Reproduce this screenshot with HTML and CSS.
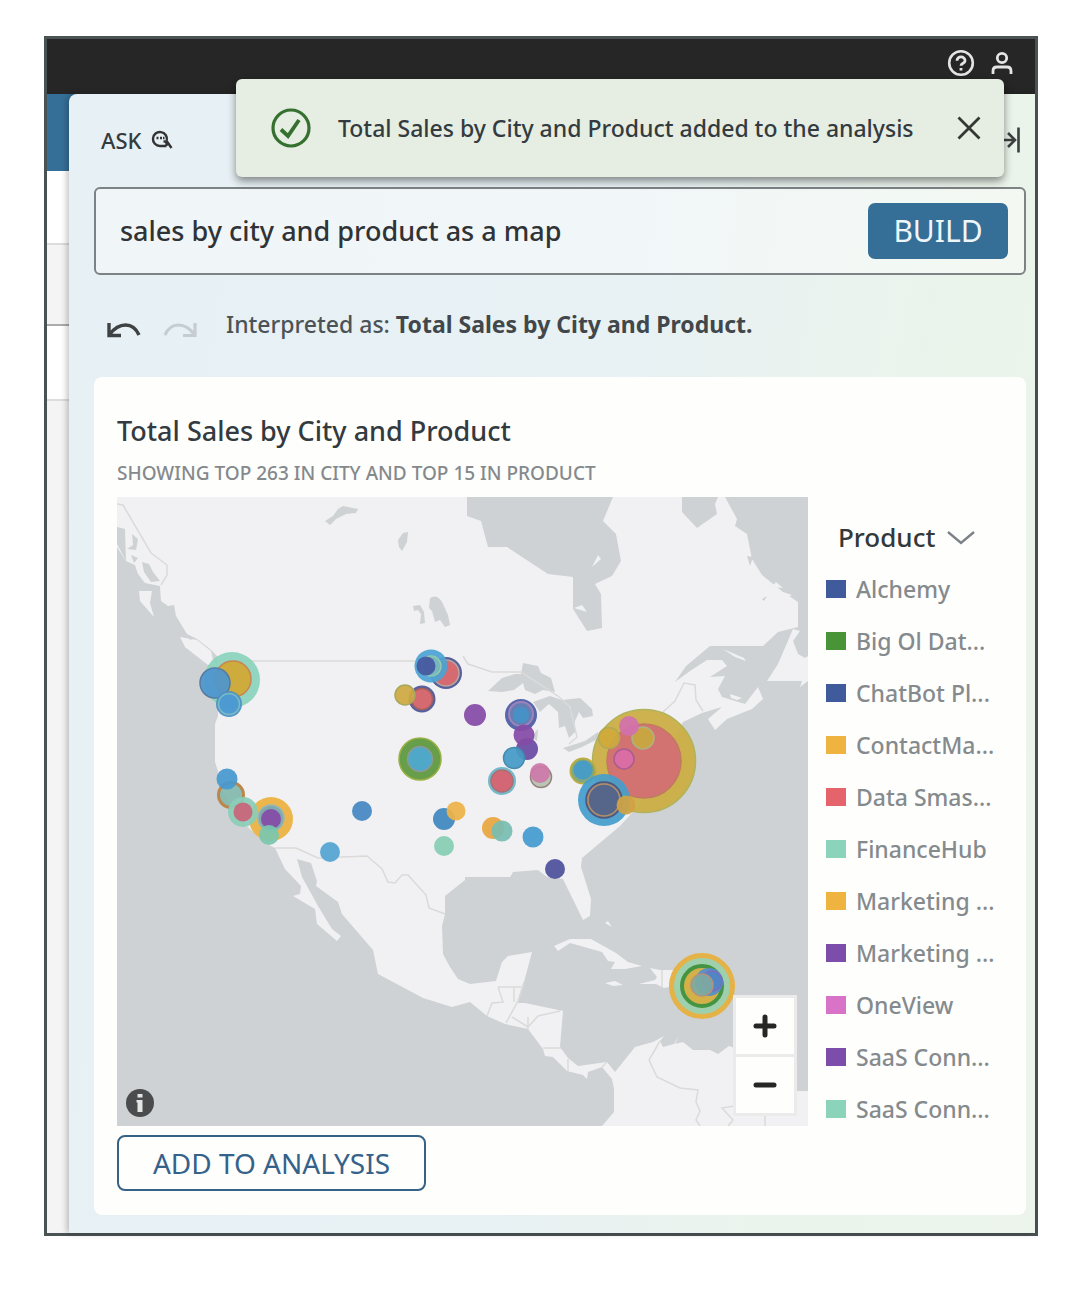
FILE: index.html
```html
<!DOCTYPE html>
<html lang="en">
<head>
<meta charset="utf-8">
<meta name="viewport" content="width=device-width, initial-scale=1">
<title>Total Sales by City and Product</title>
<link rel="stylesheet" href="styles.css">
</head>
<body>
<div class="window">
  <header class="topbar">
    <button class="icon-button" type="button" aria-label="Help">
      <svg width="28" height="28" viewBox="0 0 28 28" fill="none" stroke="#e4e4e4" stroke-width="2.600"><circle cx="14" cy="14" r="11.800"/><path d="M10 11.800c0-5.400 8.200-5 8 0-.2 2.600-4 2.400-4 5M14 19v2.600" stroke-width="2.800"/></svg>
    </button>
    <button class="icon-button" type="button" aria-label="Account">
      <svg width="22" height="24" viewBox="0 0 22 24" fill="none" stroke="#e4e4e4" stroke-width="2.800"><circle cx="11" cy="7" r="4.700"/><path d="M2 23v-3q0-4 4-4h10q4 0 4 4v3"/></svg>
    </button>
  </header>

  <div class="workspace">
    <div class="backdrop" aria-hidden="true">
      <div class="strip strip-blue"></div>
      <div class="strip strip-white"></div>
      <div class="strip strip-grey"></div>
      <div class="strip strip-field"></div>
      <div class="strip strip-rest"></div>
    </div>

    <main class="panel">
      <div class="panel-head">
        <h1 class="panel-title">ASK
          <svg width="22" height="20" viewBox="0 0 22 20" fill="none" stroke="#333" stroke-width="2.400"><path d="M15.500 16H9A7 7 0 1 1 15.800 10.500"/><path d="M12.500 11.500H16l4.500 6.500M15.500 11v5M5.500 8h2M9 8h2M12 8h1.500"/></svg>
        </h1>
        <button class="icon-button" type="button" aria-label="Collapse panel">
          <svg width="22" height="28" viewBox="0 0 22 28" fill="none" stroke="#3c4040" stroke-width="2.600"><path d="M2 14h14M9 7l7 7-7 7M19.500 1.500v25"/></svg>
        </button>
      </div>

      <form class="search">
        <input class="search-input" type="text" aria-label="Question" value="sales by city and product as a map">
        <button class="build" type="button">BUILD</button>
      </form>

      <div class="interpreted">
        <div class="history">
          <button class="icon-button" type="button" aria-label="Undo">
            <svg width="34" height="16" viewBox="0 0 34 16" fill="none" stroke="#3f4243" stroke-width="3.400"><path d="M2 1v12.500h12M2.500 12.500C12 0 26-.5 32 13"/></svg>
          </button>
          <button class="icon-button" type="button" aria-label="Redo" disabled>
            <svg width="34" height="16" viewBox="0 0 34 16" fill="none" stroke="#c6cdd0" stroke-width="3.200"><path d="M32 1v12.500H20M31.500 12.500C22 0 8-.5 2 13"/></svg>
          </button>
        </div>
        <p class="reading">Interpreted as: <strong>Total Sales by City and Product.</strong></p>
      </div>

      <section class="card">
        <h2 class="card-title">Total Sales by City and Product</h2>
        <p class="card-note">SHOWING TOP 263 IN CITY AND TOP 15 IN PRODUCT</p>
        <div class="visual">
          <div class="map">
            <svg class="map-art" viewBox="117 498 691 629" role="img" aria-label="Map of sales by city and product">
              <rect x="117" y="498" width="691" height="629" fill="#ced2d4"/>
              <g fill="#f1f1f3">
                <path d="M117 498V548L126 562 135 566 138 575 145 584 160 587 161 602 168 607 174 606 176 617 187 635 197 640 210 650 217 658V677L218 717 215 725V763L218 772 222 790 235 815 250 830 267 845 275 849 285 870 301 887 300 895 293 897 315 910 317 925 337 942 341 937 332 930 318 907 302 878 297 860 311 864 317 882 316 887 338 903 342 915 373 951 378 975 423 999 452 1008 470 1003 487 1017 505 1025 528 1030 543 1050 545 1057 553 1058 567 1072 583 1076 587 1080 588 1073 602 1068 612 1080 614 1090V1113L602 1127H808V1092H796L732 1048 729 1047 718 1055 710 1051H693L683 1043 675 1045 679 1037 674 1045 663 1048 660 1042 664 1037 653 1043 635 1048 615 1073 607 1063 578 1067 568 1059 560 1048 563 1012 525 1004H518L524 983 532 953 508 957 502 963 496 982 470 985 458 980 450 968 443 955 442 927 445 915V897L465 881V878H510L513 873 538 871 547 878 563 880 583 921 590 917 591 900 581 868 582 859 620 827 640 805 683 723 702 714 722 708 708 720 715 731 727 720 752 710 763 700 758 688 745 705 722 698 718 690 725 677 710 678 727 667 722 661H707L690 672 675 683 686 667 710 647H763L778 633 798 628V603L783 593 762 576 752 560 747 535 735 527 737 520 725 498H718L715 505 717 515 697 529 682 513V498H613L603 522 616 535 621 562 612 577 595 585 601 595 602 629 587 632 573 610V578L548 575 507 548H488L481 522 467 517V498Z"/>
                <path d="M180 638L185 648 208 666 217 668 211 652 197 641ZM139 592H152L150 604 154 618 140 602ZM793 630L800 632 793 642 798 655 805 659 808 657V682L800 688 802 682H767L778 665ZM592 568L598 556 601 560ZM574 609L582 606 587 613ZM723 650L744 659 746 662 735 658ZM730 695L742 699 737 701 731 699ZM776 583L783 589 772 588ZM783 593L792 596 786 599Z"/>
                <path d="M554 947L570 940H591L616 954 628 963 642 967 625 970H611L615 963 608 962 602 953 570 944 558 952ZM605 924L608 922 612 928ZM605 984L615 982 623 986 613 987ZM650 969L660 971H685V985L664 989 656 985H639L655 981 657 978Z"/>
              </g>
              <g fill="#ced2d4">
                <path d="M325 522L333 517 338 510 343 507 358 510 356 514 346 515 336 520 330 526ZM398 541L403 534 408 533 407 543 402 552 399 548ZM430 599Q438 594 443 605L448 616 450 626 445 628 440 621 435 623 432 612 429 609ZM413 607L420 606 424 613 425 624 420 625 421 615 418 611 414 612Z"/>
                <path d="M488 692L502 679 515 675 521 675 523 664 538 667 541 674 551 679 555 693 543 691 535 695 525 691 523 684 514 691 502 693ZM533 703L550 697 562 701 580 699 592 710 593 717 583 719 579 713 575 722 575 733 569 739 565 727 559 729 558 713 549 705 540 713ZM563 749L585 742 598 733 600 739 582 748 569 753ZM531 738L538 730 537 742Z"/>
                <path d="M132 535L138 540 136 551 127 550 133 546ZM131 556L138 559 134 564ZM142 563L149 565 153 573 160 582 151 583 144 573ZM117 528L125 530 126 562 117 545ZM188 637L195 639 190 641ZM211 651L218 658 213 661ZM747 557L753 558 750 567ZM762 600L767 597 764 602Z"/>
              </g>
              <g fill="none" stroke="#dadad9" stroke-width="1.500">
                <path d="M117 505L123 506 151 554 167 566V576L161 586M232 662H415M463 657L468 665 492 673 521 673 558 697 570 708 577 738 569 745M663 713L675 702 684 684 695 686 696 701 703 712"/>
                <path d="M275 849H296L318 859 367 857 382 870 388 883 395 884 402 876 408 876 426 896 429 909 445 915M498 988H524M498 988L503 1003 492 1004 487 1017M514 988V1003M524 983L518 1002 506 1024M512 1018L528 1028 538 1017 560 1012M528 1018V1030M543 1049H561M568 1060V1072M607 1063L602 1068M662 971V988M660 1042L649 1061 657 1078 680 1089 698 1091 696 1103 700 1112 696 1121 700 1127M734 1107L722 1109 733 1121 728 1127M765 1116V1127"/>
              </g>
              <g fill-opacity=".93" stroke-width="1.500">
                <circle cx="232" cy="681" r="28" fill="#8bd3bb"/><circle cx="233" cy="680" r="18" fill="#d2a832" stroke="#c98452"/>
                <circle cx="215" cy="684" r="15" fill="#4d96cd" stroke="#567ba2"/><circle cx="229" cy="705" r="13" fill="#4a8fc5"/><circle cx="229" cy="705" r="10.500" fill="#4d9bd4" stroke="#79bac4"/>
                <circle cx="231" cy="796" r="12.500" fill="#83b9ad" stroke="#bd864a" stroke-width="3"/><circle cx="227" cy="780" r="10.500" fill="#4799cf"/>
                <circle cx="271" cy="820" r="22" fill="#ecb23f"/><circle cx="271" cy="819" r="13" fill="#79a8b7" stroke="#9ab8b2"/><circle cx="271" cy="820" r="10" fill="#844ba6"/>
                <circle cx="243" cy="813" r="15" fill="#8bcdb8"/><circle cx="243" cy="813" r="9.500" fill="#c9647a"/><circle cx="269" cy="836" r="10" fill="#7ac6ae"/>
                <circle cx="446" cy="674" r="16" fill="#4b5495"/><circle cx="446" cy="674" r="13" fill="#e06a6e" stroke="#b6a6a1"/>
                <circle cx="431" cy="667" r="16.500" fill="#4ca4d4"/><circle cx="431" cy="667" r="10" fill="#79b9ba" stroke="#90c9b1"/><circle cx="426" cy="667" r="9.500" fill="#4657a0"/>
                <circle cx="422" cy="700" r="13.500" fill="#4b5495"/><circle cx="422" cy="700" r="10.500" fill="#e06a6e" stroke="#a9605e"/><circle cx="405" cy="696" r="10" fill="#cfaa42" stroke="#a5a85d"/>
                <circle cx="420" cy="760" r="21" fill="#5d983b" stroke="#9bb044"/><circle cx="420" cy="760" r="12.500" fill="#4fa9d3" stroke="#8e9895"/>
                <circle cx="475" cy="716" r="11" fill="#844ba6"/><circle cx="521" cy="716" r="16" fill="#4b5ca4"/><circle cx="521" cy="715" r="12" fill="#6681b4" stroke="#9d83bd" stroke-width="2"/><circle cx="521" cy="716" r="8" fill="#4592c8"/>
                <circle cx="527" cy="750" r="11" fill="#6c4ba3"/><circle cx="524" cy="736" r="10.500" fill="#844ba6"/><circle cx="514" cy="759" r="10.500" fill="#459bc6" stroke="#448bae"/>
                <circle cx="502" cy="782" r="14" fill="#6db4c7"/><circle cx="502" cy="782" r="11" fill="#da616e" stroke="#a67272"/><circle cx="541" cy="778" r="10.500" fill="#b7c2ae" stroke="#96837f"/><circle cx="540" cy="774" r="10" fill="#cd7aaa"/>
                <circle cx="362" cy="812" r="10" fill="#4588c2"/><circle cx="330" cy="853" r="10" fill="#53a5d2"/><circle cx="444" cy="820" r="11" fill="#3f88bd"/><circle cx="456" cy="812" r="9.500" fill="#edb348"/><circle cx="444" cy="847" r="10" fill="#88cdb4"/>
                <circle cx="493" cy="829" r="11" fill="#eaa63e"/><circle cx="502" cy="832" r="10.500" fill="#78bdb2"/><circle cx="533" cy="838" r="10.500" fill="#469bd0"/><circle cx="555" cy="870" r="10" fill="#4e519a"/>
                <circle cx="644" cy="762" r="51.500" fill="#cbad42" stroke="#aeb35c"/><circle cx="644" cy="762" r="37" fill="#d36e74" stroke="#bf7b60"/>
                <circle cx="609" cy="739" r="10.500" fill="#d0aa3b" stroke="#b1a954"/><circle cx="643" cy="739" r="11" fill="#c8a83f" stroke="#aab481"/><circle cx="629" cy="727" r="10" fill="#d271ad"/><circle cx="624" cy="760" r="10" fill="#d96da8" stroke="#a95b92"/>
                <circle cx="583" cy="772" r="12.500" fill="#7aa173" stroke="#bdad42" stroke-width="2"/><circle cx="583" cy="771" r="9.500" fill="#459bc9"/>
                <circle cx="604" cy="801" r="26" fill="#459ecb"/><circle cx="604" cy="801" r="18" fill="#55698c" stroke="#51567a"/><circle cx="604" cy="801" r="16" fill="#55658a" stroke="#b58f67"/><circle cx="626" cy="806" r="9.500" fill="#d0a344"/>
                <circle cx="702" cy="987" r="30.500" fill="#9ad0aa" stroke="#e5b247" stroke-width="5"/><circle cx="702" cy="987" r="20" fill="#d8ad42" stroke="#459442" stroke-width="4"/><circle cx="709" cy="983" r="14" fill="#528fc9"/><circle cx="712" cy="982" r="10" fill="#5284c5" stroke="#7b6dc0"/><circle cx="702" cy="986" r="11" fill="#7daaa0" stroke="#b09380"/>
              </g>
            </svg>
            <button class="map-info" type="button" aria-label="Map information">
              <svg width="30" height="30" viewBox="0 0 30 30"><circle cx="15" cy="15" r="14" fill="#4b4c4d"/><path d="M12.500 6h5v3.500h-5zM11.500 12h6v12h-5v-9.500h-1z" fill="#e4e5e5"/></svg>
            </button>
            <div class="map-zoom">
              <button class="zoom-button" type="button" aria-label="Zoom in"><svg width="24" height="24" viewBox="0 0 24 24" stroke="#262626" stroke-width="5" stroke-linecap="round"><path d="M3 12h18M12 3v18"/></svg></button>
              <button class="zoom-button" type="button" aria-label="Zoom out"><svg width="24" height="24" viewBox="0 0 24 24" stroke="#262626" stroke-width="5" stroke-linecap="round"><path d="M3 12h18"/></svg></button>
            </div>
          </div>
          <div class="legend">
            <button class="legend-title" type="button">Product
              <svg width="28" height="16" viewBox="0 0 28 16" fill="none" stroke="#7c8286" stroke-width="2.400"><path d="M1 3l13 11L27 3"/></svg>
            </button>
            <ul class="legend-list">
              <li class="legend-item navy">Alchemy</li>
              <li class="legend-item green">Big Ol Dat...</li>
              <li class="legend-item navy">ChatBot Pl...</li>
              <li class="legend-item amber">ContactMa...</li>
              <li class="legend-item red">Data Smas...</li>
              <li class="legend-item mint">FinanceHub</li>
              <li class="legend-item amber">Marketing ...</li>
              <li class="legend-item purple">Marketing ...</li>
              <li class="legend-item pink">OneView</li>
              <li class="legend-item purple">SaaS Conn...</li>
              <li class="legend-item mint">SaaS Conn...</li>
            </ul>
          </div>
        </div>
        <button class="add" type="button">ADD TO ANALYSIS</button>
      </section>
    </main>
  </div>

  <div class="toast" role="status">
    <svg width="40" height="40" viewBox="0 0 40 40" fill="none" stroke="#35702f" stroke-width="3.200"><circle cx="20" cy="20" r="18"/><path d="M10 21.500l7 6.500L28 12" stroke-width="3.800"/></svg>
    <p class="toast-text">Total Sales by City and Product added to the analysis</p>
    <button class="icon-button" type="button" aria-label="Dismiss">
      <svg width="24" height="24" viewBox="0 0 24 24" fill="none" stroke="#333832" stroke-width="2.800"><path d="M1.500 1.500l21 21M22.500 1.500l-21 21"/></svg>
    </button>
  </div>
</div>
</body>
</html>
```
FILE: styles.css
```css
* { box-sizing: border-box; }

body {
  margin: 0;
  padding: 36px 54px 58px 44px;
  background: #fff;
  color: #333b40;
  font-family: "Noto Sans", "Open Sans", sans-serif;
}

h1, h2, p, ul { margin: 0; padding: 0; font-weight: 500; }
button { font-family: inherit; cursor: pointer; }
svg { display: block; }

.icon-button { padding: 0; border: 0; background: none; }

.window { position: relative; border: 3px solid #4b5254; }

.topbar {
  display: flex;
  justify-content: flex-end;
  align-items: center;
  gap: 16px;
  height: 55px;
  padding: 0 22px 8px 0;
  background: #262626;
}

.workspace {
  display: grid;
  grid-template-columns: 22px 1fr;
  background: linear-gradient(#356f97 77px, #f4f4f4 77px);
}

.backdrop { display: flex; flex-direction: column; }
.strip { border-bottom: 2px solid #dcdcdc; }
.strip-blue { height: 77px; border: 0; }
.strip-white { height: 74px; background: #fff; }
.strip-grey { height: 81px; border-color: #a9abac; }
.strip-field { height: 75px; background: #fff; }
.strip-rest { flex: 1; border: 0; }

.panel {
  padding: 0 9px 18px 25px;
  border-top-left-radius: 8px;
  background: linear-gradient(100deg, #e7f0f4 0%, #e8f1f4 50%, #ebf4ea 82%, #ecf4ec 100%);
  box-shadow: -2px 0 6px rgba(0, 0, 0, .25);
}

.panel-head {
  display: flex;
  justify-content: space-between;
  align-items: center;
  height: 93px;
  padding: 0 5px 2px 7px;
}

.panel-title {
  display: flex;
  align-items: center;
  gap: 10px;
  font-size: 22px;
  line-height: 28px;
}

.search {
  display: flex;
  align-items: center;
  padding: 14px 16px 14px 24px;
  border: 2px solid #7d8284;
  border-radius: 6px;
  background: rgba(255, 255, 255, .4);
}

.search-input {
  flex: 1;
  min-width: 0;
  padding: 0;
  border: 0;
  outline: 0;
  background: none;
  color: #303336;
  font: 500 27px/36px "Noto Sans", "Open Sans", sans-serif;
}

.build {
  width: 140px;
  height: 56px;
  padding: 0;
  border: 0;
  border-radius: 7px;
  background: #356f97;
  color: #eef6fa;
  font-size: 30px;
  line-height: 40px;
}

.interpreted {
  display: flex;
  align-items: center;
  gap: 29px;
  height: 102px;
  padding: 0 13px 4px;
}

.history { display: flex; gap: 22px; padding-top: 12px; }

.reading { color: #4b5356; font-size: 23px; line-height: 32px; }
.reading strong { color: #41474a; font-weight: 700; }

.card {
  padding: 36px 24px 24px 23px;
  border-radius: 8px;
  background: #fefefd;
}

.card-title { font-size: 27px; line-height: 36px; }
.card-note { padding: 8px 0; color: #84898c; font-size: 19px; line-height: 32px; }

.visual { display: flex; gap: 18px; align-items: flex-start; }
.map { position: relative; flex: 1; min-width: 0; }
.map-art { width: 100%; }

.map-info {
  position: absolute;
  left: 8px;
  bottom: 8px;
  padding: 0;
  border: 0;
  background: none;
}

.map-zoom {
  position: absolute;
  right: 11px;
  bottom: 10px;
  display: grid;
  gap: 3px;
  padding: 3px;
  background: #ebebeb;
}

.zoom-button {
  display: grid;
  place-items: center;
  width: 58px;
  height: 56px;
  padding: 0;
  border: 0;
  background: #fefefd;
}

.legend { width: 176px; padding-top: 14px; }

.legend-title {
  display: flex;
  align-items: center;
  gap: 12px;
  padding: 0 0 0 12px;
  border: 0;
  background: none;
  color: #33383b;
  font-size: 26px;
  font-weight: 500;
  line-height: 52px;
}

.legend-list { list-style: none; }

.legend-item {
  display: flex;
  align-items: center;
  gap: 10px;
  color: #858a8d;
  font-size: 23px;
  font-weight: 500;
  line-height: 52px;
  white-space: nowrap;
}

.legend-item::before { content: ""; width: 20px; height: 18px; background: var(--swatch); }

.navy { --swatch: #3f5b9c; }
.green { --swatch: #4a9438; }
.amber { --swatch: #efb33f; }
.red { --swatch: #e5636b; }
.mint { --swatch: #8bd3bb; }
.purple { --swatch: #7c4dab; }
.pink { --swatch: #d873c7; }

.add {
  display: block;
  width: 309px;
  height: 56px;
  padding: 0;
  border: 2px solid #356286;
  border-radius: 8px;
  background: #fefefd;
  color: #35628a;
  font-size: 28px;
  line-height: 40px;
}

.toast {
  position: absolute;
  top: 40px;
  left: 189px;
  right: 31px;
  display: flex;
  align-items: center;
  height: 98px;
  padding: 0 23px 0 35px;
  border-radius: 6px;
  background: #e6ede3;
  box-shadow: 0 4px 8px rgba(0, 0, 0, .45);
}

.toast-text {
  flex: 1;
  padding-left: 27px;
  font-size: 23px;
  line-height: 32px;
  white-space: nowrap;
}
```
